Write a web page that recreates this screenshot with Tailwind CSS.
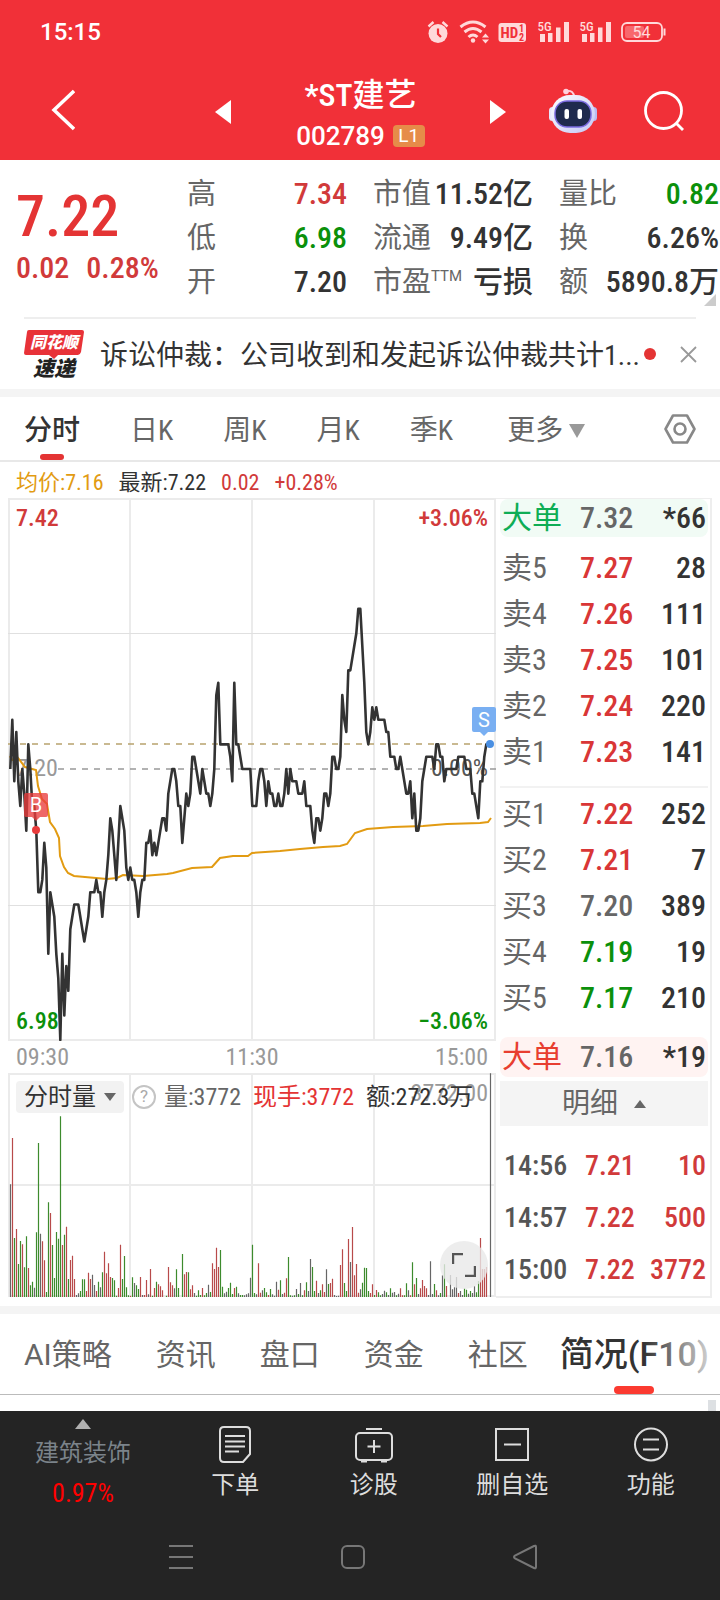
<!DOCTYPE html>
<html lang="zh-CN">
<head>
<meta charset="utf-8">
<meta name="viewport" content="width=device-width, initial-scale=1">
<title>*ST建艺 002789</title>
<script src="https://cdn.jsdelivr.net/npm/@tailwindcss/browser@4"></script>
</head>
<body class="min-h-screen bg-white font-['Roboto_Condensed','Noto_Sans_CJK_SC',sans-serif] text-[#333]">
<div class="flex min-h-screen flex-col">

<header class="bg-[#f13038] text-white">
  <!-- status bar -->
  <div class="flex h-16 items-center justify-between pl-10 pr-[54px]">
    <time class="font-['Roboto'] text-[24px] font-medium">15:15</time>
    <svg class="h-6 w-[242px]" viewBox="424 20 242 24" fill="#ffd9da" role="img" aria-label="闹钟 WiFi 5G 电量 54">
      <circle cx="438" cy="33.500" r="9.500"/>
      <path d="M428.500 26.500l5-4.500M447.500 26.500l-5-4.500" stroke="#ffd9da" stroke-width="2.400"/>
      <path d="M438 28.500v5.500l3 3" fill="none" stroke="#f13038" stroke-width="2.200"/>
      <g fill="none" stroke="#ffd9da" stroke-width="3">
        <path d="M460.500 27q12.500-10 25 0"/><path d="M464.500 32q8.500-7 17 0"/><path d="M468.500 37q4.500-4 9 0"/>
      </g>
      <circle cx="473" cy="40.500" r="2.200"/>
      <path d="M482 37.500l3.500-4 3.500 4zM482 39.500l3.500 4 3.500-4z"/>
      <rect x="498.500" y="23" width="27.500" height="19" rx="3"/>
      <g font-family="Roboto Condensed" font-weight="700" fill="#f13038">
        <text x="500.500" y="38" font-size="15">HD</text>
        <text x="519" y="32" font-size="10">1</text><text x="519" y="41" font-size="10">2</text>
      </g>
      <g font-family="Roboto Condensed" font-weight="500" font-size="13">
        <text x="537.500" y="31">5G</text><text x="579.500" y="31">5G</text>
      </g>
      <path d="M540 34h5v8h-5zM548 33h4.500v9H548zM556 27.500h4.500V42H556zM564 22h5v20h-5z"/>
      <path d="M582 34h5v8h-5zM590 33h4.500v9H590zM598 27.500h4.500V42H598zM606 22h5v20h-5z"/>
      <rect x="622" y="23" width="40" height="18" rx="5" fill="none" stroke="#ffd9da" stroke-width="1.800"/>
      <rect x="625" y="26" width="19" height="12" rx="2" fill="#f8686d"/>
      <path d="M663.500 28.500h2v7h-2z"/>
      <text x="632.500" y="37.500" font-family="Roboto" font-size="16">54</text>
    </svg>
  </div>
  <!-- title bar -->
  <div class="flex h-24 items-center pl-[51px] pr-[35px]">
    <button aria-label="返回" class="mb-1 w-[164px]"><svg class="h-11 w-6" viewBox="0 0 24 44" fill="none" stroke="#fff" stroke-width="3.500"><path d="M23 3L3 22l20 19"/></svg></button>
    <div class="flex w-[291px] items-center justify-between">
      <button aria-label="上一只"><svg class="h-6 w-4" viewBox="0 0 16 24" fill="#fff"><path d="M16 0v24L0 12z"/></svg></button>
      <div class="flex flex-col items-center pt-1.5">
        <h1 class="text-[32px] leading-[42px] font-medium">*ST建艺</h1>
        <p class="flex items-center gap-2 leading-10"><span class="font-['Roboto'] text-[26px] font-medium">002789</span><span class="flex h-[22px] w-8 items-center justify-center rounded-sm bg-[#e68c49] font-['Roboto'] text-[19px]">L1</span></p>
      </div>
      <button aria-label="下一只"><svg class="h-6 w-4" viewBox="0 0 16 24" fill="#fff"><path d="M0 0v24l16-12z"/></svg></button>
    </div>
    <div class="mb-0.5 ml-auto flex items-center gap-[45px]">
      <button aria-label="智能助手"><svg class="h-[46px] w-[50px]" viewBox="0 0 50 46">
        <defs><linearGradient id="shell" x1="0" y1="0" x2="1" y2="1"><stop offset="0" stop-color="#fff"/><stop offset="1" stop-color="#c3c6f5"/></linearGradient></defs>
        <path d="M18 3q8-1 8 6" fill="none" stroke="#ffd0dc" stroke-width="2"/><circle cx="18" cy="3.500" r="2.800" fill="#ffd0dc"/>
        <rect x="1" y="19" width="7" height="14" rx="3.500" fill="#e6e6fb"/><rect x="42" y="19" width="7" height="14" rx="3.500" fill="#b9bcf2"/>
        <rect x="3" y="7" width="44" height="38" rx="19" fill="url(#shell)"/>
        <rect x="7" y="13" width="36" height="26" rx="12" fill="#1f2a4d" stroke="#7b6be0" stroke-width="1.500"/>
        <rect x="16.500" y="21" width="4.500" height="10" rx="2" fill="#fff"/><rect x="29.500" y="21" width="4.500" height="10" rx="2" fill="#fff"/>
      </svg></button>
      <button aria-label="搜索"><svg class="h-[42px] w-[42px]" viewBox="0 0 42 42" fill="none" stroke="#fff" stroke-width="2.800"><circle cx="20.500" cy="20.500" r="18"/><path d="M33 33l7 7"/></svg></button>
    </div>
  </div>
</header>

<!-- quote summary -->
<section class="flex pt-3">
  <div class="w-[187px] pl-4 text-[#e43434]">
    <p class="mt-2 text-[58px] leading-[72px] font-medium">7.22</p>
    <p class="flex gap-[17px] text-[30px] leading-8 font-medium text-[#d13a3a]"><span>0.02</span><span>0.28%</span></p>
  </div>
  <dl class="relative grid flex-1 grid-cols-3 gap-x-[26px] pr-px text-[29px] leading-[44px] text-[#666] [&>div]:flex [&>div]:justify-between [&>div]:whitespace-nowrap [&_dd]:text-[30px] [&_dd]:font-medium">
    <div><dt>高</dt><dd class="text-[#d13a3a]">7.34</dd></div>
    <div><dt>市值</dt><dd class="text-[#333]">11.52亿</dd></div>
    <div><dt>量比</dt><dd class="text-[#0b900b]">0.82</dd></div>
    <div><dt>低</dt><dd class="text-[#0b900b]">6.98</dd></div>
    <div><dt>流通</dt><dd class="text-[#333]">9.49亿</dd></div>
    <div><dt>换</dt><dd class="text-[#333]">6.26%</dd></div>
    <div><dt>开</dt><dd class="text-[#333]">7.20</dd></div>
    <div><dt class="flex">市盈<span class="pt-[2px] font-['Roboto'] text-[15px] leading-[28px]">TTM</span></dt><dd class="text-[#333]">亏损</dd></div>
    <div><dt>额</dt><dd class="text-[#333]">5890.8万</dd></div>
    <svg class="absolute right-1 -bottom-0.5 h-3 w-3" viewBox="0 0 12 12" fill="#ccc"><path d="M12 0v12H0z"/></svg>
  </dl>
</section>

<!-- news strip -->
<section class="mx-6 mt-[13px] flex h-[72px] items-center border-t-2 border-[#eee]">
  <div class="relative w-[60px] shrink-0 text-center leading-none font-bold italic" aria-label="同花顺速递">
    <svg class="absolute inset-x-0 top-0 h-[29px] w-full" viewBox="0 0 60 29" fill="#e83238"><path d="M5 0h53q2 0 2 2l-3 20q-1 3-3 3H34l-4 4-5-4H2q-2 0-2-2L3 2q0-2 2-2z"/></svg>
    <p class="relative pt-1 text-[16px] leading-[18px] font-black text-white">同花顺</p>
    <p class="mt-[7px] text-[21px] leading-5 font-black text-[#222]">速递</p>
  </div>
  <p class="ml-4 flex-1 pt-1 text-[28px] whitespace-nowrap">诉讼仲裁：公司收到和发起诉讼仲裁共计1...</p>
  <i class="mx-1 h-3 w-3 shrink-0 rounded-full bg-[#e43434]"></i>
  <button aria-label="关闭" class="ml-5"><svg class="h-[17px] w-[17px]" viewBox="0 0 17 17" stroke="#999" stroke-width="1.800"><path d="M1 1l15 15M16 1L1 16"/></svg></button>
</section>
<div class="h-2 bg-[#f4f4f4]"></div>

<!-- period tabs -->
<nav class="flex h-[65px] items-center border-b-2 border-[#e8e8e8] pl-6 text-[28px] whitespace-nowrap text-[#666]">
  <div class="flex h-full flex-1 items-stretch gap-[50px]">
    <button class="relative pt-1 font-medium text-[#333]">分时<i class="absolute bottom-0 left-4 h-1.5 w-6 rounded-full bg-[#e43434]"></i></button>
    <button class="pt-1">日K</button><button class="pt-1">周K</button><button class="pt-1">月K</button><button class="pt-1">季K</button>
    <button class="ml-1 flex items-center gap-1.5 pt-1">更多<svg class="h-3.5 w-4" viewBox="0 0 16 14" fill="#999"><path d="M0 0h16L8 14z"/></svg></button>
  </div>
  <button aria-label="设置" class="mr-6"><svg class="h-8 w-8" viewBox="0 0 32 32" fill="none" stroke="#888" stroke-width="2.600" stroke-linejoin="round"><path d="M9 2.500h14L30.500 16 23 29.500H9L1.500 16z"/><circle cx="16" cy="16" r="5.500"/></svg></button>
</nav>

<!-- chart area and order book -->
<main class="flex">
  <div class="min-w-0 flex-1 pl-2">
    <p class="flex h-9 items-center gap-[15px] pt-1 pl-2 text-[22px] whitespace-nowrap"><span class="text-[#e29b12]">均价:7.16</span><span>最新:7.22</span><span class="text-[#d13a3a]">0.02</span><span class="text-[#d13a3a]">+0.28%</span></p>

    <figure class="relative text-[24px] leading-7">
      <span class="absolute top-1.5 left-2 font-medium text-[#d13a3a]">7.42</span>
      <span class="absolute top-1.5 right-2 font-medium text-[#d13a3a]">+3.06%</span>
      <span class="absolute top-1/2 left-2 -mt-4 text-[#999]">7.20</span>
      <span class="absolute top-1/2 right-2 -mt-4 text-[#555]">0.00%</span>
      <span class="absolute bottom-1.5 left-2 font-medium text-[#0b900b]">6.98</span>
      <span class="absolute right-2 bottom-1.5 font-medium text-[#0b900b]">−3.06%</span>
      <svg class="relative block h-auto w-full" viewBox="0 0 488 543" fill="none" role="img" aria-label="分时走势">
        <path d="M1 0V543M122 0V543M244 0V543M366 0V543M487 0V543M0 1H488M0 542H488" stroke="#ebebeb" stroke-width="2"/>
        <path d="M0 135.500H488M0 407.500H488" stroke="#e0e0e0"/>
        <path d="M0 246H480" stroke="#b8a26e" stroke-width="1.600" stroke-dasharray="6 6"/>
        <path d="M50 271H488" stroke="#999" stroke-width="1.600" stroke-dasharray="6 6"/>
        <path id="avg" stroke="#e29b12" stroke-width="2"/>
        <path id="price" stroke="#333" stroke-width="2.600" stroke-linejoin="round"/>
        <g fill="#e93c3c" fill-opacity=".78"><path d="M18 295h20q2 0 2 2v20q0 2-2 2h-6l-4 4-4-4h-6q-2 0-2-2v-20q0-2 2-2z"/><circle cx="28" cy="332" r="4" fill-opacity="1"/></g>
        <g fill="#79aff2"><path d="M466 209h20q2 0 2 2v21q0 2-2 2h-6l-4 4-4-4h-6q-2 0-2-2v-21q0-2 2-2z"/><circle cx="482" cy="246" r="4" fill="#4a8fe2"/></g>
        <g fill="#fff" font-family="Roboto" font-size="20" text-anchor="middle"><text x="28" y="314">B</text><text x="476" y="228.500">S</text></g>
      </svg>
    </figure>

    <p class="flex h-8 items-center justify-between pr-2 pl-2 text-[24px] text-[#999]"><time>09:30</time><time>11:30</time><time>15:00</time></p>

    <figure class="relative">
      <svg class="block h-auto w-full" viewBox="0 0 488 224" fill="none" role="img" aria-label="分时量">
        <path d="M1 0V224M122 0V224M244 0V224M366 0V224M487 0V224M0 1H488M0 112H488M0 223H488" stroke="#ebebeb" stroke-width="2"/>
        <path id="volK" stroke="#666" stroke-width="1.200"/>
        <path id="volR" stroke="#b84a4a" stroke-width="1.200"/>
        <path id="volG" stroke="#3d8b2d" stroke-width="1.200"/>
      </svg>
      <span class="absolute top-1.5 right-2 text-[24px] leading-7 text-[#999]">3772.00</span>
      <div class="absolute inset-x-0 top-2 flex h-8 items-center pl-2 text-[24px] whitespace-nowrap">
        <button class="flex h-8 w-[108px] items-center justify-center gap-2 rounded bg-[#f2f2f2]">分时量<svg class="h-2 w-3" viewBox="0 0 12 8" fill="#666"><path d="M0 0h12L6 8z"/></svg></button>
        <button aria-label="说明" class="ml-2 flex h-6 w-6 items-center justify-center rounded-full border-2 border-[#c4c4c4] font-['Roboto'] text-[17px] text-[#aaa]">?</button>
        <span class="ml-2 text-[#666]">量:3772</span><span class="ml-3 text-[#e43434]">现手:3772</span><span class="ml-3">额:272.3万</span>
      </div>
      <button aria-label="全屏" class="absolute right-2 bottom-2 flex h-12 w-12 items-center justify-center rounded-full bg-[#e8e8e8]/80"><svg class="h-6 w-6" viewBox="0 0 24 24" fill="none" stroke="#555" stroke-width="2.400"><path d="M1 11V1h10M23 13v10H13"/></svg></button>
    </figure>
  </div>

  <aside class="mt-9 mr-2 w-[216px] shrink-0 border-2 border-l-0 border-t border-[#eee] pr-0.5 pl-1 text-[30px] leading-9 [&_table]:w-full [&_table]:table-fixed [&_table]:text-left [&_td]:p-0 [&_td]:font-medium [&_td:last-child]:text-right [&_td:last-child]:pr-0.5 [&_th]:p-0 [&_th]:pl-0.5 [&_th]:font-normal [&_th]:text-[#666]">
    <table>
      <colgroup><col class="w-[80px]"><col class="w-[58px]"><col></colgroup>
      <tbody><tr class="h-[38px] bg-[#f1fbf5]"><th class="rounded-l-lg"><span class="text-[#0ead55]">大单</span></th><td><span class="text-[#666]">7.32</span></td><td class="rounded-r-lg">*66</td></tr></tbody>
    </table>
    <table class="mt-2 [&_tr]:h-[46px]">
      <colgroup><col class="w-[80px]"><col class="w-[58px]"><col></colgroup>
      <tbody>
        <tr><th>卖5</th><td class="text-[#d93636]">7.27</td><td>28</td></tr>
        <tr><th>卖4</th><td class="text-[#d93636]">7.26</td><td>111</td></tr>
        <tr><th>卖3</th><td class="text-[#d93636]">7.25</td><td>101</td></tr>
        <tr><th>卖2</th><td class="text-[#d93636]">7.24</td><td>220</td></tr>
        <tr><th>卖1</th><td class="text-[#d93636]">7.23</td><td>141</td></tr>
      </tbody>
    </table>
    <hr class="mt-[11px] border-t-2 border-[#f2f2f2]">
    <table class="mt-[3px] [&_tr]:h-[46px]">
      <colgroup><col class="w-[80px]"><col class="w-[58px]"><col></colgroup>
      <tbody>
        <tr><th>买1</th><td class="text-[#d93636]">7.22</td><td>252</td></tr>
        <tr><th>买2</th><td class="text-[#d93636]">7.21</td><td>7</td></tr>
        <tr><th>买3</th><td class="text-[#666]">7.20</td><td>389</td></tr>
        <tr><th>买4</th><td class="text-[#0b900b]">7.19</td><td>19</td></tr>
        <tr><th>买5</th><td class="text-[#0b900b]">7.17</td><td>210</td></tr>
      </tbody>
    </table>
    <table class="mt-4">
      <colgroup><col class="w-[80px]"><col class="w-[58px]"><col></colgroup>
      <tbody><tr class="h-10 bg-[#fff3f2]"><th class="rounded-l-lg"><span class="text-[#e83e30]">大单</span></th><td><span class="text-[#666]">7.16</span></td><td class="rounded-r-lg">*19</td></tr></tbody>
    </table>
    <button class="mt-1 flex h-[45px] w-full items-center justify-center gap-4 bg-[#f4f4f4] text-[28px] text-[#666]">明细<svg class="h-2 w-3" viewBox="0 0 12 8" fill="#666"><path d="M0 8h12L6 0z"/></svg></button>
    <table class="mt-[14px] text-[28px] text-[#d13a3a] [&_tr]:h-[52px]">
      <colgroup><col class="w-[85px]"><col class="w-[54px]"><col></colgroup>
      <tbody>
        <tr><th><span class="pl-0.5 font-medium text-[#555]">14:56</span></th><td>7.21</td><td>10</td></tr>
        <tr><th><span class="pl-0.5 font-medium text-[#555]">14:57</span></th><td>7.22</td><td>500</td></tr>
        <tr><th><span class="pl-0.5 font-medium text-[#555]">15:00</span></th><td>7.22</td><td>3772</td></tr>
      </tbody>
    </table>
  </aside>
</main>
<div class="mt-2 h-2 bg-[#f4f4f4]"></div>

<!-- detail tabs -->
<nav class="relative flex h-[81px] items-center border-b border-[#bbb] pl-0.5 font-['Roboto','Noto_Sans_CJK_SC',sans-serif] text-[30px] whitespace-nowrap text-[#666]">
  <button class="px-[22px]">AI策略</button><button class="px-[22px]">资讯</button><button class="px-[22px]">盘口</button><button class="px-[22px]">资金</button><button class="px-[22px]">社区</button>
  <button class="relative h-full px-2.5 text-[34px] font-medium text-[#333]">简况(F10)<i class="absolute bottom-0 left-1/2 -ml-5 h-2 w-10 rounded bg-[#fb3a30]"></i></button>
  <div class="pointer-events-none absolute inset-y-2 right-0 w-[76px] bg-linear-to-r from-white/0 to-white/90"></div>
</nav>
<div class="flex h-4 items-end justify-end pr-1"><div class="h-[11px] w-2 bg-[#dde0e3]"></div></div>

<!-- bottom bars -->
<footer class="flex-1 bg-[#242424] text-[24px] leading-8 text-[#ddd]">
  <nav class="flex h-[102px]">
    <button class="flex w-[166px] flex-col items-center pt-2 text-[#7b838a]"><svg class="h-2.5 w-4" viewBox="0 0 16 10" fill="#b0b0b0"><path d="M0 10h16L8 0z"/></svg><span class="mt-2">建筑装饰</span><span class="mt-2 text-[26px] text-[#f00]">0.97%</span></button>
    <button class="flex flex-1 flex-col items-center pt-3.5"><svg class="h-10 w-10" viewBox="0 0 40 40" fill="none" stroke="#ddd" stroke-width="2"><path d="M9 2h22q4 0 4 4v23l-7 8H9q-4 0-4-4V6q0-4 4-4z"/><path d="M10 11h20M10 16.500h20M10 21.500h20M10 26.500h14"/></svg><span class="mt-1">下单</span></button>
    <button class="flex flex-1 flex-col items-center pt-3.5"><svg class="h-10 w-10" viewBox="0 0 40 40" fill="none" stroke="#ddd" stroke-width="2"><rect x="2" y="8" width="36" height="27" rx="4"/><path d="M12 4h16M20 15v13M13.500 21.500h13M7 36.500h6M27 36.500h6"/></svg><span class="mt-1">诊股</span></button>
    <button class="flex flex-1 flex-col items-center pt-3.5"><svg class="h-10 w-10" viewBox="0 0 40 40" fill="none" stroke="#ddd" stroke-width="2"><rect x="4" y="4" width="32" height="31"/><path d="M12 19.500h17"/></svg><span class="mt-1">删自选</span></button>
    <button class="flex flex-1 flex-col items-center pt-3.5"><svg class="h-10 w-10" viewBox="0 0 40 40" fill="none" stroke="#ddd" stroke-width="2"><circle cx="20" cy="19.500" r="16"/><path d="M12 14.500h16M12 24.500h16"/></svg><span class="mt-1">功能</span></button>
  </nav>
  <nav class="mt-7 grid h-8 grid-cols-3 place-items-center pr-[109px] pl-[95px] text-[#777] [&_svg]:h-[26px] [&_svg]:w-[26px] [&_svg]:fill-none [&_svg]:stroke-current [&_svg]:stroke-2">
    <button aria-label="最近任务"><svg viewBox="0 0 26 26"><path d="M1 2h24M1 13h24M1 24h24"/></svg></button>
    <button aria-label="主页"><svg viewBox="0 0 26 26"><rect x="2" y="2" width="22" height="22" rx="5"/></svg></button>
    <button aria-label="后退"><svg viewBox="0 0 26 26"><path d="M24 3v20q0 2-2 1L3 14.500q-2-1.500 0-3L22 2q2-1 2 1z"/></svg></button>
  </nav>
</footer>
</div>

<script>
// Price of each minute, in cents away from the previous close (7.20)
const price = [0,4,-1,3,-1,-3,0,-2,-5,2,0,-3,-3,-5,-10,-10,-9,-6,-8,-15,-10,-11,-12,-15,-17,-22,-15,-20,-16,-18,-13,-12,-11,-11,-11,-12,-13,-14,-13,-12,-10,-10,-10,-9,-10,-10,-12,-10,-9,-7,-4,-5,-7,-9,-6,-3,-4,-5,-8,-9,-8,-9,-9,-10,-12,-10,-9,-9,-6,-6,-5,-7,-6,-7,-6,-5,-4,-4,-5,-2,-1,0,0,-1,-3,-3,-6,-4,-2,-3,-2,1,1,0,-1,-2,0,-1,-2,-2,-3,-2,0,6,7,2,2,2,2,2,1,-1,7,2,2,1,0,0,0,0,0,-3,-3,-3,-1,0,0,-1,-3,-1,-2,-2,-3,-3,-2,-3,-3,-2,0,-2,0,-1,-1,-1,-2,-2,-2,-1,-3,-3,-3,-5,-6,-4,-4,-5,-4,-2,-2,-3,-2,1,1,0,0,1,6,4,3,8,8,9,10,11,13,13,10,7,3,2,3,5,4,5,4,4,4,4,3,3,1,1,1,0,0,1,0,-1,-2,-2,-1,-4,-2,-5,-5,-4,-1,0,1,1,1,1,0,2,2,1,1,-1,0,0,0,0,0,0,1,1,1,1,0,0,0,-2,-2,-3,-4,-1,-1,1,2,2,2];
const x = i => 2.3 + i * 2;
document.getElementById('price').setAttribute('d', 'M' + price.map((p, i) => x(i).toFixed(1) + ' ' + (271 - p * 12.32).toFixed(1)).join('L'));

// Average price curve, chart units
const avg = [[2,258],[4,262],[10,260],[17,269],[28,272],[30,288],[34,301],[39,306],[42,324],[47,331],[51,340],[52,358],[56,369],[60,375],[66,378],[99,381],[109,380],[115,377],[135,378],[159,376],[165,375],[184,370],[204,369],[212,360],[225,358],[240,358],[244,355],[272,353],[292,351],[315,349],[332,348],[339,346],[347,335],[359,331],[385,329],[415,328],[439,326],[472,325],[480,324],[483,320]];
document.getElementById('avg').setAttribute('d', 'M' + avg.map(p => p.join(' ')).join('L'));

// Volume of each minute: colour letter and height in thirds of a chart unit
const vol = 'k338 r477 g177 r204 g99 g168 r158 g89 g182 r87 g35 g46 k28 g194 g462 k190 r167 r110 g15 g284 r252 g156 g57 g195 g175 g542 r156 g187 r211 g54 r111 r124 r54 k6 k11 g18 g53 g53 r18 r73 r54 k67 k36 r18 g46 k29 g74 r136 r71 r101 r60 g57 g50 g4 r27 r157 g54 g123 g29 g5 r4 g59 k42 g35 g24 r60 k6 r6 r51 k8 r84 g4 r27 g46 r38 r32 r20 k0 g4 r90 r44 r35 k26 g83 g27 k0 g129 r68 r75 g74 r23 r35 k12 g4 g20 g6 r27 g5 g12 k37 g15 r101 r84 r148 r90 g141 g31 k11 k16 g27 g43 g9 r27 g31 k11 g6 g6 k5 k8 k11 k58 g157 g12 k8 r101 r13 k20 g27 g14 r6 g24 k8 k4 k46 r22 g50 k9 r13 r56 g120 g5 k4 g5 k24 g9 k42 g5 r20 g44 k18 k114 g90 g18 r49 k12 g20 r38 r15 k83 g39 r42 r55 k6 k3 k4 r96 r143 g42 g18 r174 k105 r210 r65 r99 r13 k23 g43 g88 g87 g18 r12 r38 g6 r21 g14 g5 k9 k19 g14 k6 g26 k13 k15 g5 k10 r26 r5 g5 g41 k20 r5 g104 r38 g57 k9 r26 r51 r33 r26 k6 k107 k9 g39 r20 k5 g12 k65 g98 r33 k0 k66 k23 k29 k60 r12 k18 k6 g26 g22 k10 g18 k12 k33 g14 g48 r177 r84 r84 r90 k0 k671'.split(' ');
const bars = { k: '', r: '', g: '' };
vol.forEach((v, i) => { bars[v[0]] += 'M' + (x(i) + .2).toFixed(1) + ' 224v-' + (v.slice(1) / 3).toFixed(1); });
document.getElementById('volK').setAttribute('d', bars.k);
document.getElementById('volR').setAttribute('d', bars.r);
document.getElementById('volG').setAttribute('d', bars.g);
</script>
</body>
</html>
